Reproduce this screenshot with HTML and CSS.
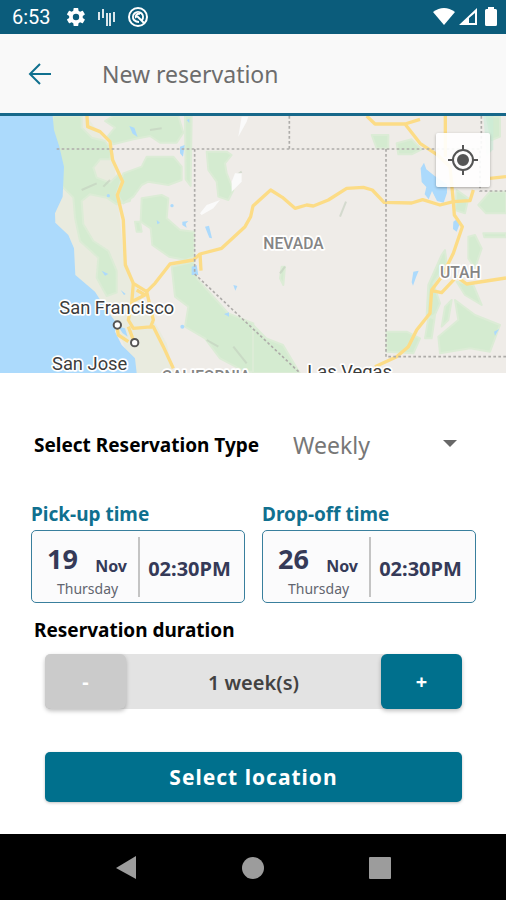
FILE: index.html
```html
<!DOCTYPE html>
<html lang="en">
<head>
    <meta charset="UTF-8">
    <meta name="viewport" content="width=device-width, initial-scale=1.0">
    <title>New reservation</title>
    <link rel="stylesheet" href="styles.css">
</head>
<body>
    <div class="status-bar">
        <span class="clock">6:53</span>
        <svg class="status-icon" viewBox="1 1 22 22" fill="#fff"><path d="M19.4 13a7.6 7.6 0 0 0 0-2l2.1-1.6a.5.5 0 0 0 .1-.6l-2-3.500a.5.5 0 0 0-.6-.2l-2.500 1a7.300 7.300 0 0 0-1.700-1l-.4-2.600a.5.5 0 0 0-.5-.5h-4a.5.5 0 0 0-.5.5L9 5.100a7.700 7.700 0 0 0-1.700 1l-2.500-1a.5.5 0 0 0-.6.2l-2 3.500a.5.5 0 0 0 .1.6L4.500 11a7.600 7.600 0 0 0 0 2l-2.200 1.600a.5.5 0 0 0-.1.6l2 3.500c.1.2.4.3.6.2l2.500-1a7.300 7.300 0 0 0 1.700 1l.4 2.600c0 .3.2.5.5.5h4c.3 0 .5-.2.5-.5l.4-2.600a7.700 7.700 0 0 0 1.700-1l2.500 1c.2.1.5 0 .6-.2l2-3.500a.5.5 0 0 0-.1-.6zM12 15.500a3.500 3.500 0 1 1 0-7 3.500 3.500 0 0 1 0 7z"/></svg>
        <svg class="status-icon" viewBox="0 0 20 20" stroke="#fff" stroke-width="2"><path d="M2 5v8M6 2v7M6 9v2M10 6v13M13 6v13M17 5v10" opacity=".85"/></svg>
        <svg class="status-icon" viewBox="0 0 20 20" fill="none" stroke="#fff" stroke-width="2"><circle cx="10" cy="10" r="9"/><path d="M14 13a5 5 0 1 0-8 0q2 2 5 2M9 9l7 7M8 11a3 3 0 0 1 4-4"/></svg>
        <div class="status-right">
            <svg width="22" height="20" viewBox="0 0 22 20" fill="#fff"><path d="M0 5q11-8 22 0L11 18z"/></svg>
            <svg width="18" height="20" viewBox="0 0 18 20" fill="#fff"><path fill-rule="evenodd" d="M0 18L18 1V18zM10 11V16H16V6z"/></svg>
            <svg class="battery" width="12" height="20" viewBox="0 0 12 20" fill="#fff"><path d="M3 0h6v2h1.500q1.500 0 1.500 1.500v14q0 1.500-1.500 1.500h-9Q0 19 0 17.500v-14Q0 2 1.500 2H3z"/></svg>
        </div>
    </div>

    <header class="app-bar">
        <button type="button" class="back-btn" aria-label="Back">
            <svg width="24" height="24" viewBox="0 0 24 24" fill="none" stroke="#10708f" stroke-width="2"><path d="M23 12H2M12 2L2 12l10 10"/></svg>
        </button>
        <h1>New reservation</h1>
    </header>

    <div class="map">
        <svg class="map-canvas" viewBox="0 18 1518 771" preserveAspectRatio="xMidYMid slice">
            <rect y="18" width="1518" height="771" fill="#efece8"/>
            <!-- farmland tint inland of the coast -->
            <path d="M155 18H260L340 130 370 430 420 560 500 700 520 789H405L345 640 225 500 215 400 165 335z" fill="#e9ebdf"/>
            <!-- forests -->
            <g fill="#d4ebd0" stroke="#dcecd6" stroke-width="6" stroke-linejoin="round">
                <path d="M160 18l85 0 0 35 30 30 40 10 20 30-5 25-30 0-20 25 10 30 40 15 25-25 15 10 25 25-5 45-40 10-30-20-50-10-25 20 5 70 30 50 45 30 25 60 0 65-30 10-30-55 5-60-55-50-15-70-5-60-45-45-5-40 0-45-25-50z"/>
                <path d="M340 18h195l15 50-20 30-50 0-30-20-50 10-60 15-20-20 25-30-30-20zM440 140l80 0 25 30 0 40-40 15-60-10-20 10-25 35-30 20-20-30 20-60 55-20z"/>
                <path d="M555 18h20l-3 210-15-20z"/>
                <path d="M425 265l60-10 20 10-5 60 40 35 42 5v75l-25 10-50-10-50-35-5-50-30-20z"/>
                <path d="M620 125l60 0 15 10-20 25 5 30 20 50-15 30-30-10-5-45-25-35z"/>
                <path d="M515 470l65-15 10 50 45 50 50 55 75 30v145H735l-75-40-45-60-60-35 10-60-40-30z"/>
                <path d="M759 645l40 40 50 20 50 84H759z"/>
                <path d="M1115 75h50v40l-35 0zM1190 100l45-12 30 30-30 15-40 0z"/>
                <path d="M1460 20h40v60l-25 10zM1435 285l35-40h48v65l-60 0zM1370 240l35 25-10 45-30-10zM1405 380l20-5 20 40-20 60-20-30zM1450 370h68v12h-65z"/>
                <path d="M1325 435l10-15 5 40-40 60 20 60-20 45-20-10 5-90zM1370 515l50 10 25 60-50-30zM1365 570l60 45 75 30-30 80-60-10-90 15-5-50 60-50zM1160 665l60 0 40 20-20 45-80-5zM1335 590l20-20-10 60-20 20zM1285 625l20-10-10 70-20 0z"/>
                <path d="M845 470l10 0-5 55-10-20zM405 335l15 0 5 30-15 0z"/>
            </g>
            <path d="M245 240l45-20M310 230l20-20M450 60l35-5M705 200l20-15M620 690l35 20M700 710l40 50M1020 320l18-45M840 490l15-20" stroke="#c3cfbe" stroke-width="6" opacity=".6"/>
            <g fill="#fafafa">
                <path d="M715 80l25-45 5-15-20 0zM695 215l10-25 20 0 0 25-30 30zM600 310l20-25 40-15-20 25-35 20z"/>
            </g>
            <!-- ocean and lakes -->
            <g fill="#acdafc">
                <path d="M0 18H158L162 60 178 110 192 170 188 260 165 310 166 338 205 375 222 415 226 495 285 545 320 600 350 640 345 665 365 705 405 745 410 789H0z"/>
                <path d="M388 48l15 5 10 28-15-10zM540 110l14-5-5 35-9-10zM575 470l15-5 5 30-20 0zM615 350l12-3 9 38-8-2zM547 335l18-2-8 8 3 12-13-8zM305 482l20 10-10 5zM362 540l15 12-5 3zM700 525l12 3-6 14zM355 650l20 5 8 25-15-10zM672 612l15-5 0 13zM560 30l8-4 0 13zM470 330l10 8-8 5z"/>
                <path d="M1262 175l10-17 7 20 25 20 37 25v25l-10 30-20-5-15-30-10 25-12-15 5-22-14-15zM1360 335l15-10 5 15-10 25-11-8zM1240 485l16-3-8 20-9 25-4-10zM1482 665l15-8-12 20z"/>
                <circle cx="547" cy="650" r="6"/><circle cx="516" cy="287" r="5"/><circle cx="325" cy="257" r="5"/>
            </g>
            <path d="M1450 18h30v100l-20 20z" fill="#c9ecd9" opacity=".6"/>
            <!-- highways -->
            <g fill="none" stroke="#fcdc86" stroke-width="10" stroke-linejoin="round">
                <path d="M261 18L263 50 300 65 330 95 338 150 368 215 352 255 370 330 376 465 400 520 440 545 465 520 510 462 580 450 600 432 665 415 735 350 752 320 759 288 812 240 847 262 885 295 920 285 940 288 985 270 1040 235 1090 232 1117 240 1152 277 1235 279 1268 269 1320 285 1360 275 1410 272 1420 240"/>
                <path d="M400 520L395 580 385 630 400 655 460 650 490 710 520 775M440 545L460 630 450 655M410 540L435 555 395 575M350 645L355 675 385 695M385 650L400 690M600 432L603 482"/>
                <path d="M1100 18L1125 42 1215 42 1260 28M1215 42L1260 100 1310 133 1350 170 1360 275 1363 315 1387 350 1360 430 1325 500 1295 540 1290 610 1250 660 1225 710 1190 740 1125 770M1336 18V140M1518 200L1470 205M1518 504L1400 522 1370 500 1325 548 1295 542"/>
            </g>
            <!-- state borders -->
            <path d="M170 117H1440V243H1518M1444 18V117M868 18V117M584 117V492L900 789M1158 117V740H1518" fill="none" stroke="#aeaca9" stroke-width="5" stroke-dasharray="8 7"/>
            <g fill="#fff" stroke="#555" stroke-width="6">
                <circle cx="352" cy="645" r="11"/><circle cx="404" cy="698" r="11"/>
            </g>
            <g class="city">
                <text x="178" y="612">San Francisco</text>
                <text x="156" y="780">San Jose</text>
                <text x="922" y="803">Las Vegas</text>
            </g>
            <g class="state">
                <text x="790" y="416">NEVADA</text>
                <text x="1320" y="503">UTAH</text>
                <text x="485" y="816">CALIFORNIA</text>
            </g>
        </svg>
        <button type="button" class="locate-btn" aria-label="My location">
            <svg width="30" height="30" viewBox="0 0 30 30" fill="none" stroke="#555" stroke-width="2"><circle cx="15" cy="15" r="10"/><circle cx="15" cy="15" r="5" fill="#555"/><path d="M15 0v5M15 25v5M0 15h5M25 15h5"/></svg>
        </button>
    </div>

    <form class="reservation">
        <div class="type-row">
            <label for="type">Select Reservation Type</label>
            <div class="select-wrap">
                <select id="type" name="type">
                    <option>Daily</option>
                    <option selected>Weekly</option>
                    <option>Monthly</option>
                </select>
            </div>
        </div>

        <div class="times">
            <div class="time">
                <h2>Pick-up time</h2>
                <button type="button" class="time-card">
                    <span class="date">
                        <span class="day">19</span>
                        <span class="month">Nov</span>
                        <span class="weekday">Thursday</span>
                    </span>
                    <span class="hour">02:30PM</span>
                </button>
            </div>
            <div class="time">
                <h2>Drop-off time</h2>
                <button type="button" class="time-card">
                    <span class="date">
                        <span class="day">26</span>
                        <span class="month">Nov</span>
                        <span class="weekday">Thursday</span>
                    </span>
                    <span class="hour">02:30PM</span>
                </button>
            </div>
        </div>

        <h3>Reservation duration</h3>
        <div class="stepper">
            <button type="button" class="step-btn" disabled>-</button>
            <output class="duration">1 week(s)</output>
            <button type="button" class="step-btn">+</button>
        </div>

        <button type="submit" class="submit-btn">Select location</button>
    </form>

    <nav class="nav-bar">
        <button type="button" aria-label="Back"><svg width="24" height="24" viewBox="0 0 24 24"><path d="M22 0v23L2 12z"/></svg></button>
        <button type="button" aria-label="Home"><svg width="24" height="24" viewBox="0 0 24 24"><circle cx="12" cy="12" r="11"/></svg></button>
        <button type="button" aria-label="Recent apps"><svg width="24" height="24" viewBox="0 0 24 24"><rect x="1" y="1" width="22" height="22" rx="1"/></svg></button>
    </nav>
</body>
</html>
```
FILE: styles.css
```css
* {
    margin: 0;
    padding: 0;
    box-sizing: border-box;
}

body {
    font-family: 'Noto Sans', sans-serif;
    background: #fff;
    min-height: 100vh;
    display: flex;
    flex-direction: column;
}

button, select {
    font-family: inherit;
    border: none;
    background: none;
    cursor: pointer;
}

svg {
    display: block;
}

.status-bar {
    display: flex;
    align-items: center;
    height: 34px;
    padding: 0 9px 0 12px;
    background: #0b5c7b;
    color: #fff;
}

.clock {
    font-family: Roboto, sans-serif;
    font-size: 20px;
    margin-right: 15px;
}

.status-icon {
    width: 20px;
    height: 20px;
    margin-right: 11px;
}

.status-right {
    display: flex;
    gap: 4px;
    margin-left: auto;
}

.battery {
    margin-left: 4px;
}

.app-bar {
    display: flex;
    align-items: center;
    height: 82px;
    padding: 0 28px;
    background: #f9f9f9;
    border-bottom: 3px solid #17688a;
}

.back-btn {
    width: 74px;
}

h1 {
    font-size: 23px;
    font-weight: 400;
    color: #6d6d6d;
}

.map {
    position: relative;
    height: 257px;
    overflow: hidden;
}

.map-canvas {
    width: 100%;
    height: 100%;
}

.city, .state {
    font-family: Roboto, sans-serif;
    stroke: #fff;
    stroke-width: 10px;
    stroke-linejoin: round;
    paint-order: stroke;
}

.city {
    font-size: 55px;
    fill: #3c3c3c;
}

.state {
    font-size: 47px;
    font-weight: 500;
    fill: #858585;
}

.locate-btn {
    position: absolute;
    top: 17px;
    right: 16px;
    width: 54px;
    height: 54px;
    padding: 12px;
    background: rgba(255, 255, 255, 0.9);
    border-radius: 2px;
    box-shadow: 0 1px 3px rgba(0, 0, 0, 0.3);
}

.reservation {
    flex: 1;
    padding: 52px 30px 32px 31px;
}

.type-row {
    display: flex;
    align-items: center;
    height: 40px;
    padding-left: 3px;
    margin-bottom: 34px;
}

.type-row label {
    font-size: 19px;
    font-weight: 700;
}

.select-wrap {
    position: relative;
    flex: 1;
    margin-left: 34px;
}

.select-wrap::after {
    content: '';
    position: absolute;
    top: 50%;
    right: 19px;
    margin-top: -5px;
    border: 7px solid transparent;
    border-top-color: #686868;
    border-bottom: none;
    pointer-events: none;
}

select {
    width: 100%;
    appearance: none;
    font-size: 23px;
    color: #777;
}

.times {
    display: flex;
    gap: 17px;
    margin-bottom: 14px;
}

.time {
    flex: 1;
}

h2 {
    font-size: 19px;
    line-height: 31px;
    color: #10708f;
}

.time-card {
    display: flex;
    align-items: center;
    width: 100%;
    height: 73px;
    background: #fbfbfc;
    border: 1px solid #397f9d;
    border-radius: 5px;
    color: #353a58;
}

.date {
    display: grid;
    grid-template-columns: 1fr 1fr;
    align-items: end;
    width: 108px;
    height: 60px;
    padding-right: 11px;
    padding-left: 15px;
    border-right: 2px solid #c4c4c4;
    text-align: left;
}

.day {
    font-size: 27px;
    line-height: 44px;
    font-weight: 700;
}

.month {
    font-size: 16px;
    line-height: 30px;
    font-weight: 700;
    text-align: right;
}

.weekday {
    grid-column: 1 / 3;
    font-size: 14px;
    line-height: 16px;
    padding-left: 10px;
    color: #62656f;
}

.hour {
    flex: 1;
    padding-top: 4px;
    padding-right: 5px;
    font-size: 20px;
    line-height: 30px;
    font-weight: 700;
}

h3 {
    font-size: 19px;
    line-height: 26px;
    padding-left: 3px;
    margin-bottom: 11px;
}

.stepper {
    display: flex;
    height: 55px;
    margin: 0 14px 43px;
    background: #e3e3e3;
    border-radius: 5px;
}

.step-btn {
    width: 81px;
    background: #00708d;
    border-radius: 6px;
    box-shadow: 0 2px 4px rgba(0, 0, 0, 0.25);
    color: #fff;
    font-size: 20px;
    font-weight: 700;
}

.step-btn:disabled {
    background: #cbcbcb;
    color: #fff;
    cursor: default;
}

.duration {
    flex: 1;
    text-align: center;
    font-size: 20px;
    line-height: 58px;
    font-weight: 600;
    color: #424242;
}

.submit-btn {
    display: block;
    width: calc(100% - 28px);
    height: 50px;
    margin: 0 14px;
    background: #00708d;
    border-radius: 5px;
    box-shadow: 0 1px 3px rgba(0, 0, 0, 0.25);
    color: #fff;
    font-size: 21px;
    font-weight: 700;
    letter-spacing: 1px;
}

.nav-bar {
    display: flex;
    justify-content: center;
    gap: 103px;
    height: 67px;
    background: #000;
}

.nav-bar svg {
    fill: #9c9c9c;
}
```
